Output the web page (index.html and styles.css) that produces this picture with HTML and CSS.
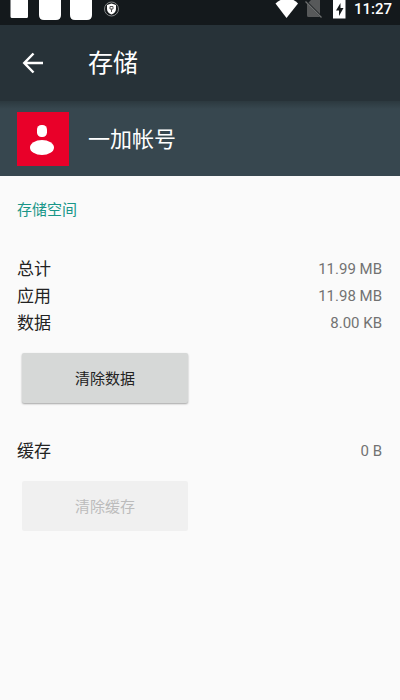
FILE: index.html
```html
<!DOCTYPE html>
<html lang="zh-CN">
<head>
<meta charset="utf-8">
<meta name="viewport" content="width=device-width, initial-scale=1">
<title>存储</title>
<link rel="stylesheet" href="styles.css">
</head>
<body>
<div class="status">
  <svg class="notices" width="130" height="25" viewBox="0 0 130 25" aria-hidden="true">
    <path fill="#fff" d="M10.500 0H28v16.500q0 1.500-1.500 1.500H12q-1.500 0-1.500-1.500zM39 0h22v15q0 5-5 5H44q-5 0-5-5zM70 0h22v15q0 5-5 5H75q-5 0-5-5z"/>
    <circle cx="111.500" cy="9" r="7" fill="#15191b" stroke="#858889"/>
    <path fill="#fff" d="M111.500 3.500l4.500 1.500v4q0 3.500-4.500 5.500q-4.500-2-4.500-5.500V5z"/>
    <path fill="none" stroke="#555" d="M110 6.500h3v2.500h-3zM111.500 9v3"/>
  </svg>
  <svg class="signals" width="72" height="25" viewBox="0 0 72 25" aria-hidden="true">
    <path fill="#fff" d="M.500 3.500Q3 1 5.500 0h13q2.500 1 4.500 3.500L11.500 18z"/>
    <path fill="#57595a" d="M36 0h9v14L33.500 2.500zM32 3.500L45 17H33.500q-1.500 0-1.500-1.500z"/>
    <path fill="none" stroke="#6c6e6f" stroke-width="1.300" d="M30.500 1.500L46.500 17.500"/>
    <path fill="#fff" d="M58 0h12.500v18.500H58z"/>
    <path fill="#15191b" d="M65.500 3L61 10.500h3V16l4.500-8h-3z"/>
  </svg>
  <time class="clock">11:27</time>
</div>
<header class="toolbar">
  <button class="back" type="button" aria-label="返回">
    <svg width="22" height="22" viewBox="0 0 22 22" aria-hidden="true"><path fill="none" stroke="#fff" stroke-width="2.500" d="M21 11H2.500M11.500 1.500L2.300 11l9.200 9.500"/></svg>
  </button>
  <h1 class="title">存储</h1>
</header>
<section class="app">
  <svg class="app-icon" width="52" height="54" viewBox="0 0 52 54" aria-hidden="true">
    <path fill="#e90029" d="M0 0h52v54H0z"/>
    <rect x="20" y="13" width="10" height="12" rx="4.500" fill="#fff"/>
    <ellipse cx="25" cy="35.500" rx="12" ry="7.500" fill="#fff"/>
  </svg>
  <h2 class="app-name">一加帐号</h2>
</section>
<main class="content">
  <h3 class="section-title">存储空间</h3>
  <dl class="rows">
    <div class="row"><dt>总计</dt><dd>11.99 MB</dd></div>
    <div class="row"><dt>应用</dt><dd>11.98 MB</dd></div>
    <div class="row"><dt>数据</dt><dd>8.00 KB</dd></div>
  </dl>
  <button class="action" type="button">清除数据</button>
  <dl class="rows">
    <div class="row"><dt>缓存</dt><dd>0 B</dd></div>
  </dl>
  <button class="action" type="button" disabled>清除缓存</button>
</main>
</body>
</html>
```
FILE: styles.css
```css
* {
  box-sizing: border-box;
}

body {
  margin: 0;
  min-height: 100vh;
  background: #fafafa;
  color: #222;
  font-family: Roboto, "Noto Sans CJK SC", sans-serif;
}

h1, h2, h3, dl, dd {
  margin: 0;
  font-weight: 400;
}

svg {
  display: block;
  flex: none;
}

.status {
  display: flex;
  height: 25px;
  padding-right: 8px;
  background: #14191c;
  color: #fff;
}

.signals {
  margin-left: auto;
}

.clock {
  margin-left: 7px;
  font-size: 15px;
  font-weight: 500;
  line-height: 18px;
}

.toolbar {
  display: flex;
  align-items: center;
  height: 76px;
  padding: 0 17px;
  background: #273238;
  color: #fff;
}

.back {
  width: 32px;
  margin-right: 39px;
  padding: 5px;
  border: 0;
  background: none;
}

.title {
  padding-top: 2px;
  font-size: 25px;
  line-height: 36px;
}

.app {
  display: flex;
  align-items: center;
  gap: 19px;
  height: 75px;
  padding: 0 17px;
  background: linear-gradient(#2c393f, #37474f 8px);
  color: #fff;
}

.app-name {
  padding-top: 2px;
  font-size: 22px;
  line-height: 32px;
}

.content {
  padding: 21px 18px 20px 17px;
}

.section-title {
  margin-bottom: 33px;
  color: #199688;
  font-size: 15px;
  line-height: 26px;
}

.row {
  display: flex;
  align-items: center;
  justify-content: space-between;
  line-height: 27px;
}

.row dt {
  font-size: 17px;
}

.row dd {
  color: #727272;
  font-size: 15px;
}

.action {
  display: block;
  width: 45%;
  min-width: 166px;
  height: 50px;
  margin: 16px 0 35px 5px;
  padding: 0 0 2px;
  border: 0;
  border-radius: 2px;
  background: #d6d8d7;
  box-shadow: 0 1px 2px rgba(0, 0, 0, 0.35);
  color: #222;
  font: 15px Roboto, "Noto Sans CJK SC", sans-serif;
}

.action:disabled {
  background: #f0f0f0;
  box-shadow: none;
  color: #bcbcbc;
}
```
